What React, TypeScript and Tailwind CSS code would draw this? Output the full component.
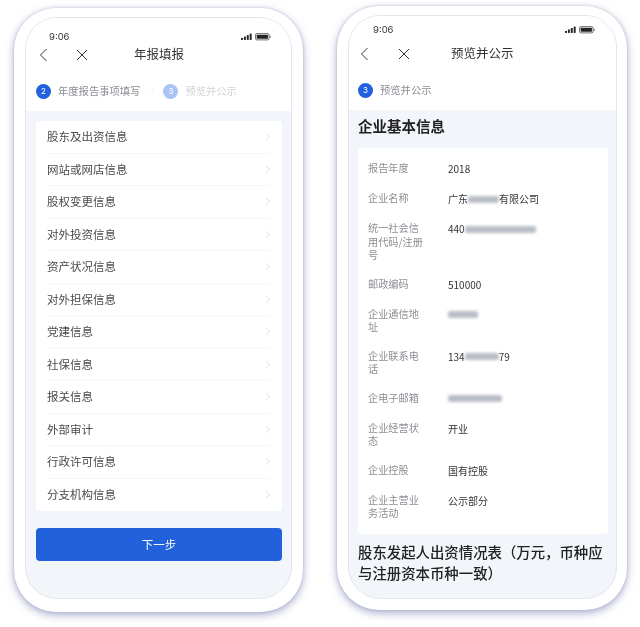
import React from "react";

const cjk = "font-['Noto_Sans_CJK_SC','Noto_Sans',sans-serif]";

const menuItems = [
  "股东及出资信息",
  "网站或网店信息",
  "股权变更信息",
  "对外投资信息",
  "资产状况信息",
  "对外担保信息",
  "党建信息",
  "社保信息",
  "报关信息",
  "外部审计",
  "行政许可信息",
  "分支机构信息",
];

function Chevron({ className }: { className?: string }) {
  return (
    <svg className={className} viewBox="0 0 8 12" fill="none" stroke="currentColor" strokeWidth="1">
      <path d="M1.5 1.5 6 6l-4.5 4.5" />
    </svg>
  );
}

function StatusBar({ className }: { className: string }) {
  return (
    <div className={`flex items-center justify-between ${className}`}>
      <span className="font-['Inter',sans-serif] text-[9.5px] leading-none text-[#333]">9:06</span>
      <svg width="30" height="8" viewBox="0 0 31 8">
        <rect x="0" y="5" width="2" height="2" fill="#222" />
        <rect x="3" y="3.5" width="2" height="3.5" fill="#222" />
        <rect x="6" y="2" width="2" height="5" fill="#222" />
        <rect x="9" y="0.5" width="2" height="6.5" fill="#222" />
        <rect x="15" y="0.5" width="14" height="6.5" rx="1.5" fill="none" stroke="#444" strokeWidth="0.8" />
        <rect x="16.2" y="1.7" width="11.6" height="4.1" fill="#222" />
        <rect x="29.6" y="2.8" width="1" height="2" fill="#555" />
      </svg>
    </div>
  );
}

function NavBar({ title, className, closeClass, titleClass }: { title: string; className: string; closeClass: string; titleClass: string }) {
  return (
    <div className={`flex h-[20px] items-center ${className}`}>
      <svg width="9" height="14" viewBox="0 0 9 14" fill="none" stroke="#333" strokeWidth="1">
        <path d="M7.5 1 1.5 7l6 6" />
      </svg>
      <svg className={closeClass} width="12" height="12" viewBox="0 0 12 12" fill="none" stroke="#333" strokeWidth="1">
        <path d="M1 1l10 10M11 1 1 11" />
      </svg>
      <span className={`text-[12.5px] leading-none text-[#333] ${titleClass}`}>{title}</span>
    </div>
  );
}

function StepDot({ n, faded }: { n: number; faded?: boolean }) {
  return (
    <span
      className={`flex h-[15px] w-[15px] shrink-0 items-center justify-center rounded-full font-['Inter',sans-serif] text-[8px] leading-none text-white ${
        faded ? "bg-[#a9c3f2]" : "bg-[#2162dc]"
      }`}
    >
      {n}
    </span>
  );
}

function FormPhone() {
  return (
    <div className="h-[604px] w-[289px] shrink-0 rounded-[42px] bg-white pb-[13px] pl-[11px] pr-[11px] pt-[9px] shadow-[0_3px_8px_rgba(150,155,195,0.8),0_0_3px_rgba(170,175,200,0.6)]">
      <div className="flex h-full w-full flex-col overflow-hidden rounded-[32px] border border-[#e4e6ec] bg-[#f2f5f9]">
        <div className="h-[93px] shrink-0 bg-white">
          <StatusBar className="pl-[23px] pr-[20px] pt-[14px]" />
          <div className="mt-[3px]">
            <NavBar title="年报填报" className="pl-[13px]" closeClass="ml-[28px]" titleClass="ml-[46px]" />
          </div>
          <div className="mt-[19px] flex items-center pl-[10px]">
            <StepDot n={2} />
            <span className="ml-[7px] text-[10.3px] leading-none text-[#8a8d94]">年度报告事项填写</span>
            <Chevron className="ml-[10px] h-[8px] w-[6px] text-[#e2e4e8]" />
            <span className="ml-[7px]">
              <StepDot n={3} faded />
            </span>
            <span className="ml-[7px] text-[10.3px] leading-none text-[#d0d2d7]">预览并公示</span>
          </div>
        </div>
        <div className="ml-[10px] mr-[9px] mt-[10px] rounded-[4px] bg-white px-[11px]">
          {menuItems.map((item, idx) => (
            <div
              key={item}
              className={`flex h-[32.5px] items-center justify-between ${idx < menuItems.length - 1 ? "border-b border-[#f7f7f8]" : ""}`}
            >
              <span className="text-[11.5px] leading-none text-[#4a4a4a]">{item}</span>
              <Chevron className="h-[9px] w-[6px] text-[#d4d6da]" />
            </div>
          ))}
        </div>
        <button className="ml-[10px] mr-[9px] mt-[17px] flex h-[33px] items-center justify-center rounded-[4px] bg-[#2162dc] text-[11.5px] text-white">
          下一步
        </button>
      </div>
    </div>
  );
}

function Blurred({ width, className = "" }: { width: number; className?: string }) {
  return <span className={`inline-block h-[7px] rounded-[2px] bg-[#b9bec6] blur-[1.5px] ${className}`} style={{ width }} />;
}

const infoRows: { label: string[]; value: React.ReactNode }[] = [
  { label: ["报告年度"], value: "2018" },
  {
    label: ["企业名称"],
    value: (
      <>
        广东
        <Blurred width={31} />
        有限公司
      </>
    ),
  },
  {
    label: ["统一社会信", "用代码/注册", "号"],
    value: (
      <>
        440
        <Blurred width={71} />
      </>
    ),
  },
  { label: ["邮政编码"], value: "510000" },
  { label: ["企业通信地", "址"], value: <Blurred width={30} /> },
  {
    label: ["企业联系电", "话"],
    value: (
      <>
        134
        <Blurred width={34} />
        79
      </>
    ),
  },
  { label: ["企电子邮箱"], value: <Blurred width={54} /> },
  { label: ["企业经营状", "态"], value: "开业" },
  { label: ["企业控股"], value: "国有控股" },
  { label: ["企业主营业", "务活动"], value: "公示部分" },
];

function PreviewPhone() {
  return (
    <div className="h-[604px] w-[290px] shrink-0 rounded-[42px] bg-white pb-[11px] pl-[11px] pr-[10px] pt-[9px] shadow-[0_3px_8px_rgba(150,155,195,0.8),0_0_3px_rgba(170,175,200,0.6)]">
      <div className="flex h-full w-full flex-col overflow-hidden rounded-[32px] border border-[#e4e6ec] bg-[#f2f5f9]">
        <div className="h-[94px] shrink-0 bg-white">
          <StatusBar className="pl-[24px] pr-[21px] pt-[9px]" />
          <div className="mt-[9px]">
            <NavBar title="预览并公示" className="pl-[11px]" closeClass="ml-[29px]" titleClass="ml-[41px]" />
          </div>
          <div className="mt-[19px] flex items-center pl-[9px]">
            <StepDot n={3} />
            <span className="ml-[7px] text-[10.3px] leading-none text-[#8a8d94]">预览并公示</span>
          </div>
        </div>
        <h2 className="mt-[6px] pl-[9px] text-[14.5px] font-bold leading-[20px] text-[#222]">企业基本信息</h2>
        <div className="ml-[9px] mr-[8px] mt-[12px] h-[386px] shrink-0 rounded-[4px] bg-white pl-[10px] pt-[13px]">
          <div className="flex flex-col gap-[15px]">
            {infoRows.map((row) => (
              <div key={row.label[0]} className="flex">
                <div className="min-h-[15px] w-[80px] shrink-0 text-[10.2px] leading-[13.5px] text-[#8d8f94]">
                  {row.label.map((line) => (
                    <div key={line}>{line}</div>
                  ))}
                </div>
                <div className="flex h-[14px] items-center pt-[2px] text-[10px] leading-none text-[#333]">{row.value}</div>
              </div>
            ))}
          </div>
        </div>
        <p className="mt-[7px] pl-[9px] pr-[8px] text-[14.4px] font-medium leading-[21px] text-[#222]">
          股东发起人出资情况表（万元，币种应与注册资本币种一致）
        </p>
      </div>
    </div>
  );
}

export default function App() {
  return (
    <div className={`flex h-[627px] w-[640px] items-start overflow-hidden bg-white pl-[14px] blur-[0.35px] ${cjk}`}>
      <div className="mt-[8px]">
        <FormPhone />
      </div>
      <div className="ml-[34px] mt-[6px]">
        <PreviewPhone />
      </div>
    </div>
  );
}
